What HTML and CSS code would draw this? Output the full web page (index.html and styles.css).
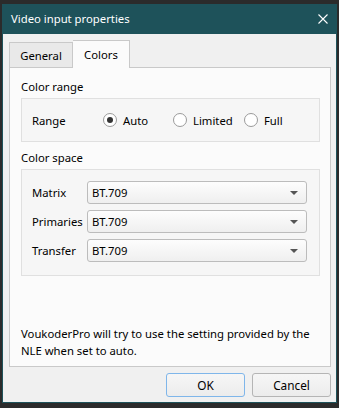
FILE: index.html
```html
<!DOCTYPE html>
<html lang="en">
<head>
    <meta charset="UTF-8">
    <title>Video input properties</title>
    <link rel="stylesheet" href="styles.css">
</head>
<body>
    <div class="window">
        <div class="titlebar">
            <span class="title">Video input properties</span>
            <svg class="close" width="10" height="10" viewBox="0 0 10 10">
                <path d="M0.5 0.5 L9.5 9.5 M9.5 0.5 L0.5 9.5" stroke="#fff" stroke-width="1.1" fill="none"/>
            </svg>
        </div>

        <div class="content">
            <div class="tabs">
                <div class="tab general">General</div>
                <div class="tab active">Colors</div>
            </div>

            <div class="pane">
                <div class="group-title">Color range</div>
                <div class="group range-group">
                    <span class="row-label">Range</span>
                    <label class="radio"><span class="dot checked"></span>Auto</label>
                    <label class="radio"><span class="dot"></span>Limited</label>
                    <label class="radio"><span class="dot"></span>Full</label>
                </div>

                <div class="group-title">Color space</div>
                <div class="group space-group">
                    <div class="combo-row">
                        <span class="row-label">Matrix</span>
                        <div class="combo">BT.709<span class="arrow"></span></div>
                    </div>
                    <div class="combo-row">
                        <span class="row-label">Primaries</span>
                        <div class="combo">BT.709<span class="arrow"></span></div>
                    </div>
                    <div class="combo-row">
                        <span class="row-label">Transfer</span>
                        <div class="combo">BT.709<span class="arrow"></span></div>
                    </div>
                </div>

                <p class="note">VoukoderPro will try to use the setting provided by the NLE when set to auto.</p>
            </div>

            <div class="buttons">
                <button class="btn default">OK</button>
                <button class="btn">Cancel</button>
            </div>
        </div>
    </div>
</body>
</html>
```

FILE: styles.css
```css
* {
    margin: 0;
    padding: 0;
    box-sizing: border-box;
}

body {
    background-color: #2b2b2b;
    font-family: 'Noto Sans', sans-serif;
    font-size: 11.3px;
    color: #000;
}

.window {
    margin: 4px 2px 0;
    height: 399px;
    border: 1px solid #1e525a;
    background-color: #f0f0f0;
    display: flex;
    flex-direction: column;
}

.titlebar {
    height: 29px;
    background-color: #1e525a;
    display: flex;
    align-items: center;
    justify-content: space-between;
    padding: 0 8px 0 8px;
    color: #fff;
    font-size: 11.3px;
}

.title {
    margin-top: -2px;
}

.close {
    margin-top: -1px;
}

.content {
    flex: 1;
    display: flex;
    flex-direction: column;
    padding: 6px 5px 5px 6px;
}

.tabs {
    display: flex;
    align-items: flex-end;
    height: 27px;
}

.tab {
    height: 25px;
    background-color: #e9e9e9;
    border: 1px solid #c9c9c9;
    border-bottom: none;
    display: flex;
    align-items: center;
    justify-content: center;
}

.tab.general {
    width: 64px;
}

.tab.active {
    width: 57px;
    height: 28px;
    margin-bottom: -1px;
    background-color: #fbfbfb;
    position: relative;
    z-index: 1;
    border-left: none;
}

.pane {
    height: 300px;
    background-color: #fbfbfb;
    border: 1px solid #c9c9c9;
    display: flex;
    flex-direction: column;
    padding: 11px 10px 7px 11px;
}

.group-title {
    line-height: 16px;
    margin-bottom: 3px;
}

.group {
    background-color: #f6f6f6;
    border: 1px solid #e0e0e0;
    margin-bottom: 8px;
}

.range-group {
    height: 44px;
    display: flex;
    align-items: center;
    padding-left: 10px;
}

.range-group .row-label {
    width: 71px;
}

.radio {
    display: flex;
    align-items: center;
    gap: 6px;
}

.radio:nth-of-type(1) {
    width: 70px;
}

.radio:nth-of-type(2) {
    width: 71px;
}

.dot {
    width: 14px;
    height: 14px;
    border: 1px solid #9a9a9a;
    border-radius: 50%;
    background-color: #fff;
    display: flex;
    align-items: center;
    justify-content: center;
}

.dot.checked::after {
    content: '';
    width: 6px;
    height: 6px;
    border-radius: 50%;
    background-color: #333;
}

.space-group {
    height: 107px;
    padding: 11px 12px 0 10px;
    display: flex;
    flex-direction: column;
    gap: 6px;
}

.combo-row {
    display: flex;
    align-items: center;
}

.combo-row .row-label {
    width: 55px;
}

.combo {
    flex: 1;
    height: 23px;
    border: 1px solid #bcbcbc;
    border-radius: 3px;
    background: linear-gradient(#fdfdfd, #efefef);
    display: flex;
    align-items: center;
    justify-content: space-between;
    padding: 0 8px 0 4px;
}

.arrow {
    width: 0;
    height: 0;
    border-left: 4px solid transparent;
    border-right: 4px solid transparent;
    border-top: 4px solid #555;
}

.note {
    margin-top: auto;
    line-height: 17px;
}

.buttons {
    display: flex;
    justify-content: flex-end;
    gap: 7px;
    margin-top: 6px;
}

.btn {
    width: 79px;
    height: 24px;
    font-family: inherit;
    font-size: 11.8px;
    background: linear-gradient(#f6f6f6, #ececec);
    border: 1px solid #b5b5b5;
    border-radius: 3px;
}

.btn.default {
    border-color: #7fb6ea;
}
```
